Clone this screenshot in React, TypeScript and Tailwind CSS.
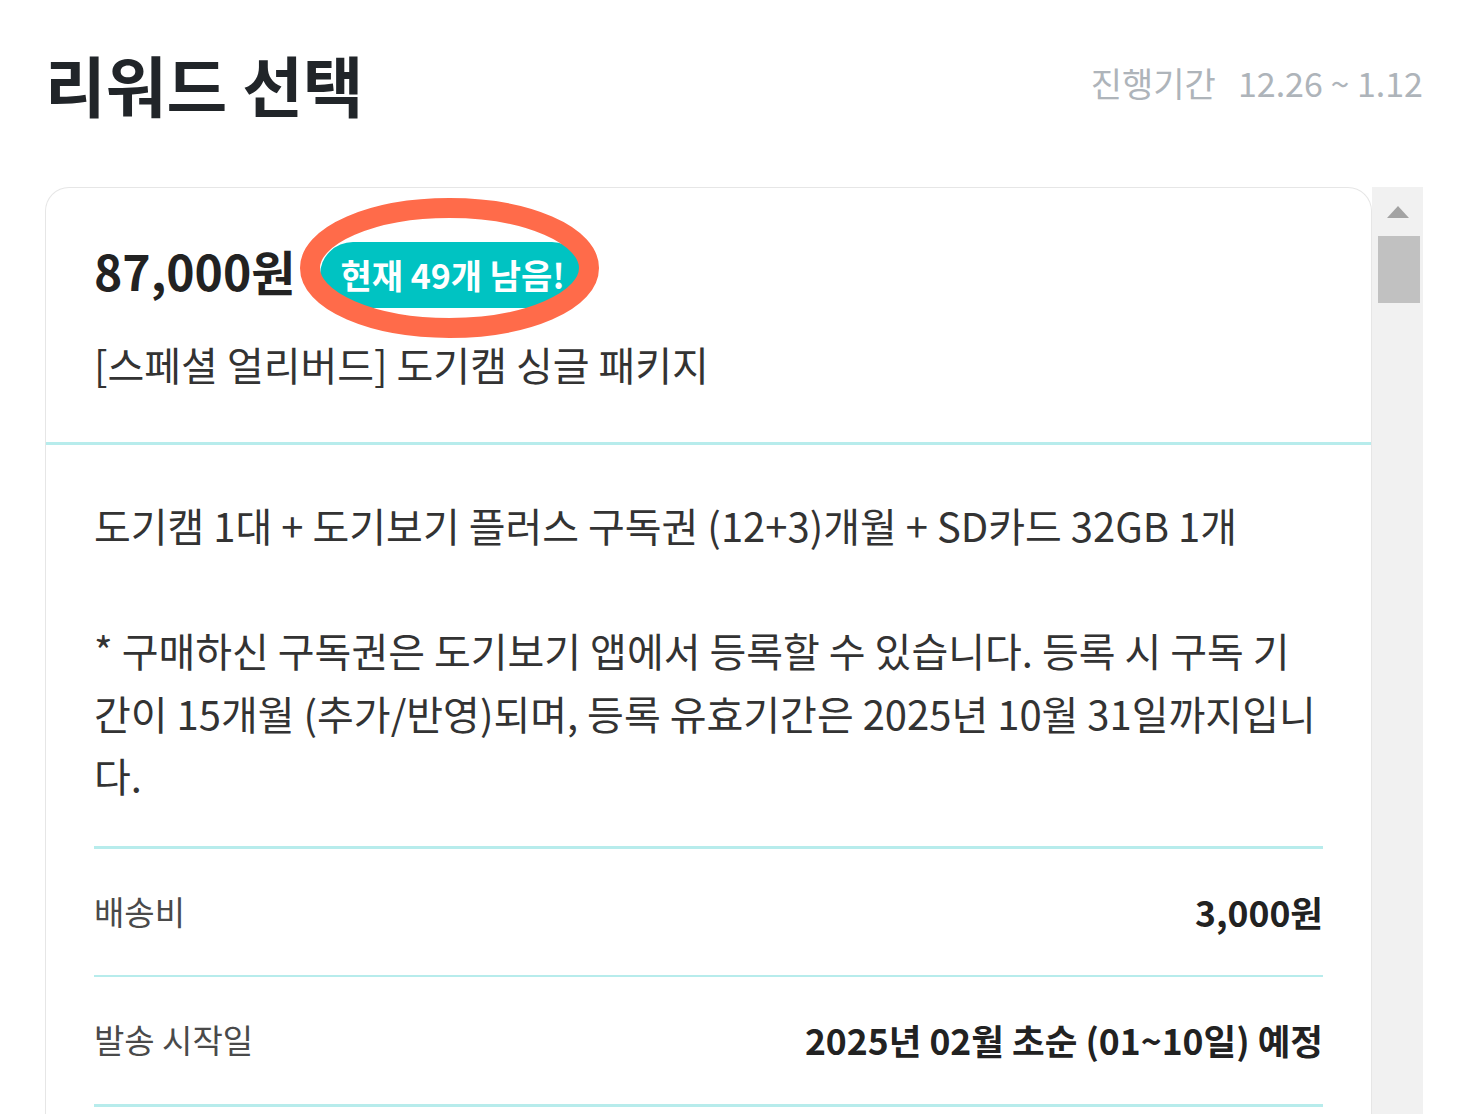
import React from "react";

export default function App() {
  return (
    <div className="h-screen overflow-hidden bg-white px-[45px] font-['Noto_Sans_CJK_KR','Noto_Sans',sans-serif]">
      <div className="flex h-[125px] items-center justify-between pt-[41px]">
        <h1 className="text-[66px] font-bold leading-[84px] text-[#212529]">리워드 선택</h1>
        <div className="flex items-center gap-[22px] text-[34px] leading-[48px] text-[#aeb4ba]">
          <span>진행기간</span>
          <span>12.26 ~ 1.12</span>
        </div>
      </div>

      <div className="mt-[62px] flex h-[1000px]">
        <div className="flex-1 overflow-hidden rounded-t-[24px] border border-b-0 border-[#e6e6e6] bg-white">
          <div className="px-[48px] pt-[50px] pb-[50px]">
            <div className="flex h-[64px] items-center gap-[25px]">
              <span className="text-[48px] font-bold leading-[64px] text-[#222]">87,000원</span>
              <div className="relative mt-[10px]">
                <span className="block rounded-full bg-[#00c3c2] px-[20px] text-[34px] font-bold leading-[66px] text-white">
                  현재 49개 남음!
                </span>
                <svg
                  className="pointer-events-none absolute left-[-20px] top-[-44px]"
                  width="299"
                  height="140"
                  viewBox="0 0 299 140"
                >
                  <ellipse cx="149.5" cy="70" rx="139.5" ry="60" fill="none" stroke="#ff6b4a" strokeWidth="20" />
                </svg>
              </div>
            </div>
            <p className="mt-[34px] text-[40px] leading-[56px] text-[#333]">[스페셜 얼리버드] 도기캠 싱글 패키지</p>
          </div>

          <div className="h-[3px] bg-[#b7ecec]" />

          <div className="px-[48px] pt-[49px]">
            <div className="whitespace-nowrap text-[40px] leading-[62.5px] text-[#333]">
              <span className="block">도기캠 1대 + 도기보기 플러스 구독권 (12+3)개월 + SD카드 32GB 1개</span>
              <span className="block h-[62.5px]" />
              <span className="block">* 구매하신 구독권은 도기보기 앱에서 등록할 수 있습니다. 등록 시 구독 기</span>
              <span className="block">간이 15개월 (추가/반영)되며, 등록 유효기간은 2025년 10월 31일까지입니</span>
              <span className="block">다.</span>
            </div>

            <div className="mt-[39px] h-[3px] bg-[#b7ecec]" />
            <div className="flex h-[126px] items-center justify-between">
              <span className="text-[33px] text-[#4a4a4a]">배송비</span>
              <span className="text-[35.5px] font-bold text-[#222]">3,000원</span>
            </div>
            <div className="h-[2px] bg-[#b7ecec]" />
            <div className="flex h-[127px] items-center justify-between">
              <span className="text-[33px] text-[#4a4a4a]">발송 시작일</span>
              <span className="text-[35.5px] font-bold text-[#222]">2025년 02월 초순 (01~10일) 예정</span>
            </div>
            <div className="h-[3px] bg-[#b7ecec]" />
          </div>
        </div>

        <div className="flex w-[51px] flex-col items-center bg-[#f1f1f1]">
          <svg className="mt-[19px]" width="22" height="12" viewBox="0 0 22 12">
            <polygon points="11,0 22,12 0,12" fill="#a3a3a3" />
          </svg>
          <div className="mt-[18px] ml-[2px] h-[67px] w-[42px] bg-[#c1c1c1]" />
        </div>
      </div>
    </div>
  );
}
